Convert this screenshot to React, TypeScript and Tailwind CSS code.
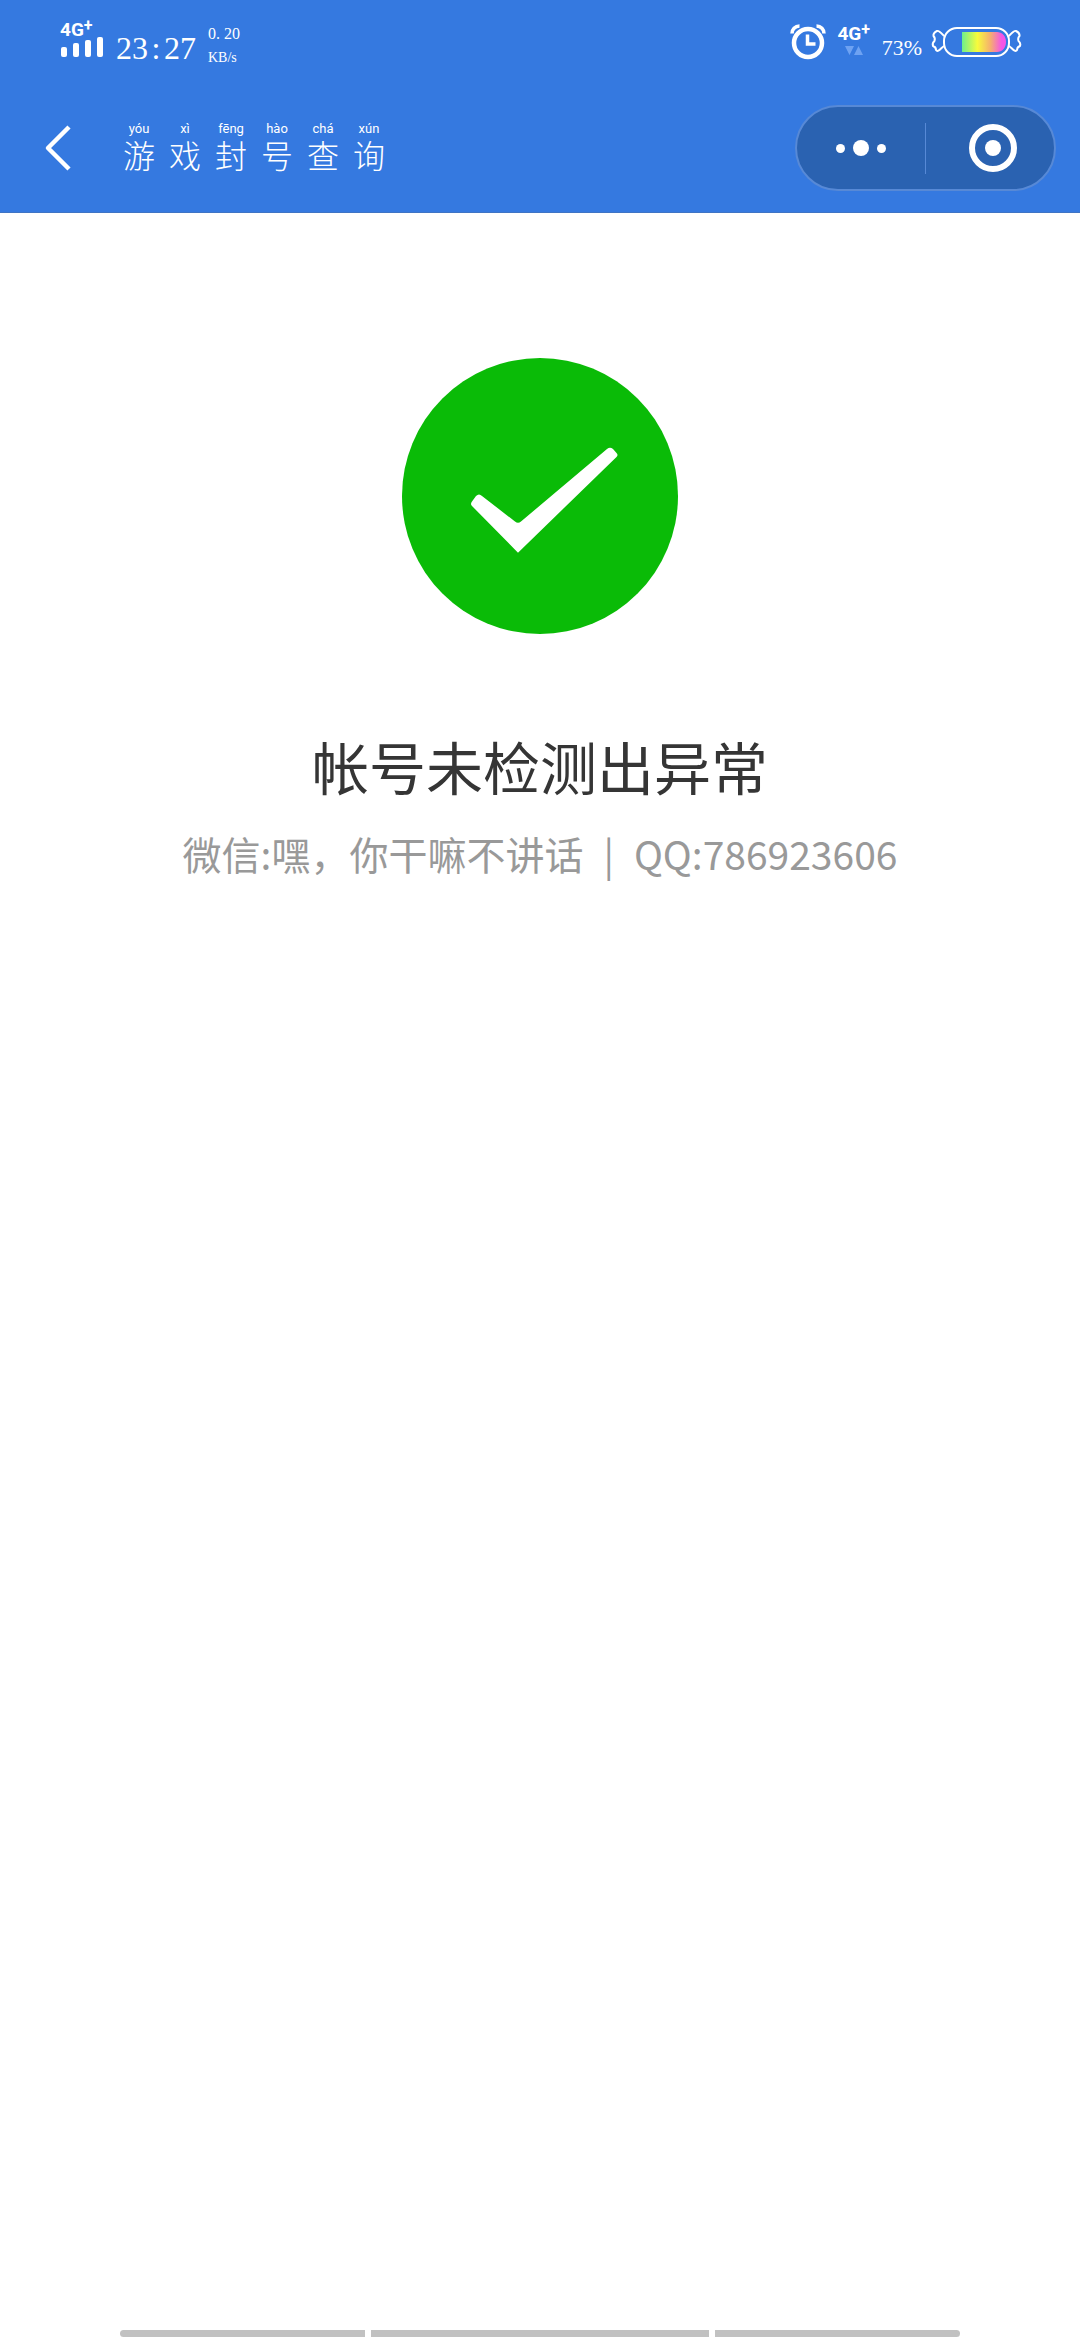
import { useState } from "react";

// ------------------ Types ------------------
interface TitleChar {
  char: string;
  pinyin: string;
}

interface QueryResult {
  title: string;
  wechat: string;
  qq: string;
}

// ------------------ Data ------------------
const titleChars: TitleChar[] = [
  { char: "游", pinyin: "yóu" },
  { char: "戏", pinyin: "xì" },
  { char: "封", pinyin: "fēng" },
  { char: "号", pinyin: "hào" },
  { char: "查", pinyin: "chá" },
  { char: "询", pinyin: "xún" },
];

const initialResult: QueryResult = {
  title: "帐号未检测出异常",
  wechat: "嘿，你干嘛不讲话",
  qq: "786923606",
};

// ------------------ Icons ------------------
const SignalBars = () => (
  <svg width="44" height="20" viewBox="0 0 44 20" fill="currentColor" aria-hidden="true">
    <rect x="1" y="10" width="6" height="10" rx="2" />
    <rect x="13" y="6" width="6" height="14" rx="2" />
    <rect x="25" y="3" width="6" height="17" rx="2" />
    <rect x="37" y="0" width="6" height="20" rx="2" />
  </svg>
);

const AlarmIcon = () => (
  <svg width="36" height="36" viewBox="0 0 36 36" fill="none" stroke="currentColor" aria-hidden="true">
    <circle cx="18" cy="19" r="14" strokeWidth="4.500" />
    <path d="M17.500 10.500v9.500h8" strokeWidth="3.500" />
    <path d="M2 9.500c0-4 3-7.500 7.500-7.500M34 9.500c0-4-3-7.500-7.500-7.500" strokeWidth="3.500" />
  </svg>
);

const BatteryIcon = () => (
  <svg width="92" height="32" viewBox="0 0 92 32" fill="none" stroke="currentColor" strokeWidth="2" strokeLinejoin="round" aria-hidden="true">
    <defs>
      <linearGradient id="battery" x1="0" y1="0" x2="1" y2="0">
        <stop offset="0" stopColor="#6ef08c" />
        <stop offset="0.350" stopColor="#f7fb3c" />
        <stop offset="0.650" stopColor="#f5ae70" />
        <stop offset="0.900" stopColor="#f455e6" />
      </linearGradient>
    </defs>
    <rect x="14" y="2" width="65" height="28" rx="13" />
    <path d="M32 6h35c5 0 9 4 9 10s-4 10-9 10H32z" fill="url(#battery)" stroke="none" />
    <path d="M14 10C12 8 9 4 7 5S3 7 3.500 10Q5.500 12 4.500 15Q2 17 3 20Q6 21 6 24C8 27 11 22 14 20" />
    <path d="M79 10C81 8 84 4 86 5S90 7 89.500 10Q87.500 12 88.500 15Q91 17 90 20Q87 21 87 24C85 27 82 22 79 20" />
  </svg>
);

const NetworkLabel = () => (
  <span className="flex h-4 items-start font-['Roboto'] text-[19px] leading-5 font-bold">
    4G<sup className="top-0 text-base leading-3">+</sup>
  </span>
);

// ------------------ Sections ------------------
const StatusBar = () => (
  <div className="flex h-21 items-start justify-between pt-5 pr-[58px] pl-15">
    <div className="flex gap-3">
      <div className="flex w-11 flex-col gap-px">
        <NetworkLabel />
        <SignalBars />
      </div>
      <time className="flex pt-3 font-['Liberation_Serif'] text-[32px] leading-8">
        23<span className="w-4 text-center">:</span>27
      </time>
      <div className="flex flex-col gap-1 pt-1 font-['Liberation_Serif']">
        <span className="text-base leading-5">0. 20</span>
        <span className="text-[14px] leading-5">KB/s</span>
      </div>
    </div>

    <div className="flex items-start gap-3">
      <div className="pt-1">
        <AlarmIcon />
      </div>
      <div className="flex w-8 flex-col items-center gap-1.5 pt-1">
        <NetworkLabel />
        <svg width="18" height="9" viewBox="0 0 18 9" fill="#6ea2f2" aria-hidden="true">
          <path d="M0 0h9L4.500 9zM9 9h9L13.500 0z" />
        </svg>
      </div>
      <div className="flex items-start gap-2">
        <span className="pt-3 font-['Liberation_Serif'] text-[22px] leading-8">73%</span>
        <div className="pt-1.5">
          <BatteryIcon />
        </div>
      </div>
    </div>
  </div>
);

const NavBar = () => (
  <div className="flex h-32 items-center justify-between pr-6 pl-10">
    <div className="flex items-center gap-10">
      <button type="button" aria-label="返回" className="cursor-pointer">
        <svg width="36" height="48" viewBox="0 0 36 48" fill="none" stroke="currentColor" strokeWidth="4.500" strokeLinejoin="round">
          <path d="M29 3L8 24l21 21" />
        </svg>
      </button>
      <h1 className="flex pb-1">
        {titleChars.map(({ char, pinyin }) => (
          <span key={char} className="flex w-[46px] flex-col items-center">
            <span className="font-['Roboto'] text-[13px] leading-4">{pinyin}</span>
            <span className="font-['Noto_Sans_CJK_SC',sans-serif] text-[32px] leading-[34px] font-light">{char}</span>
          </span>
        ))}
      </h1>
    </div>

    <div className="flex h-[86px] w-[261px] items-center rounded-full border-2 border-[#5789d6] bg-[#2a62b1]">
      <button type="button" aria-label="更多" className="flex w-1/2 cursor-pointer items-center justify-center gap-2">
        <span className="size-[9px] rounded-full bg-white" />
        <span className="size-4 rounded-full bg-white" />
        <span className="size-[9px] rounded-full bg-white" />
      </button>
      <span className="h-[51px] w-px bg-[#5789d6]" />
      <button type="button" aria-label="关闭" className="flex w-1/2 cursor-pointer justify-center pl-1.5">
        <span className="flex size-12 items-center justify-center rounded-full border-[6px] border-white">
          <span className="size-4 rounded-full bg-white" />
        </span>
      </button>
    </div>
  </div>
);

const SuccessIcon = () => (
  <svg width="276" height="276" viewBox="0 0 276 276" aria-hidden="true">
    <circle cx="138" cy="138" r="138" fill="#0abb07" />
    <path
      fill="#fff"
      d="M74 138Q77 135 80 138L113 163.500Q116 166 119 163.500L205 91Q208 88.500 211 91L214.500 95Q216.500 97 214.500 99L116 194.700L70 148Q68 146 70 143.500Z"
    />
  </svg>
);

// ------------------ Component ------------------
const App = () => {
  const [result] = useState<QueryResult>(initialResult);

  return (
    <div className="flex min-h-screen flex-col bg-white font-['Noto_Sans_CJK_SC',sans-serif]">
      <header className="border-b border-[#3f74c4] bg-[#3579e0] text-white">
        <StatusBar />
        <NavBar />
      </header>

      <main className="flex flex-1 flex-col items-center pt-[145px] text-center">
        <SuccessIcon />
        <h2 className="mt-[91px] text-[57px] leading-20 text-[#353535]">{result.title}</h2>
        <p className="mt-5 flex gap-5 text-[39px] leading-14 text-[#999999]">
          <span>微信:{result.wechat}</span>
          <span>|</span>
          <span>QQ:{result.qq}</span>
        </p>
      </main>

      <footer className="mx-30 mb-[3px] grid h-[7px] grid-cols-[245fr_338fr_245fr] gap-1.5">
        <span className="rounded-l-full bg-[#c1c1c1]" />
        <span className="bg-[#c1c1c1]" />
        <span className="rounded-r-full bg-[#c1c1c1]" />
      </footer>
    </div>
  );
};

export default App;
